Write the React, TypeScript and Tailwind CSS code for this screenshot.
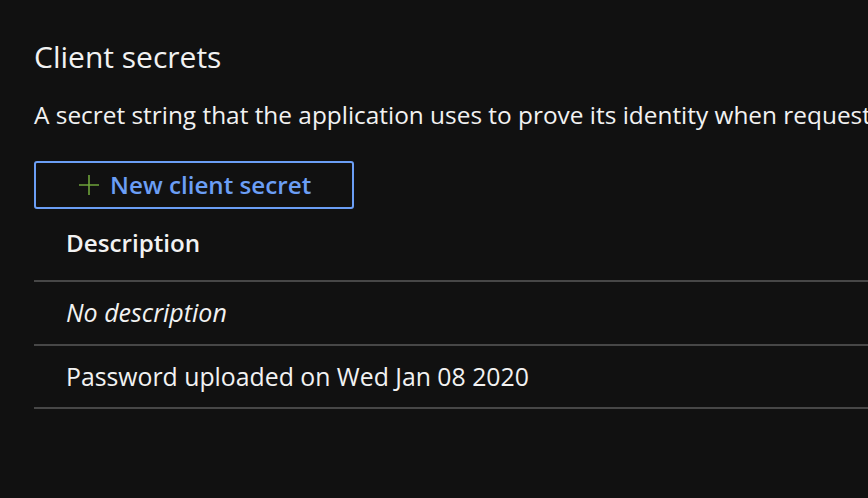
export default function App() {
  const rows = ['Password uploaded on Wed Jan 08 2020'];

  return (
    <div className="h-[498px] w-[868px] overflow-hidden bg-[#111111] font-['Open_Sans',sans-serif] text-[#f2f2f2]">
      <div className="pl-[34px] pt-[37px]">
        <h2 className="whitespace-nowrap text-[30px] leading-[40px]">Client secrets</h2>
        <p className="mt-[20px] whitespace-nowrap text-[24.4px] leading-[36px]">
          A secret string that the application uses to prove its identity when requesting a token. Also can be referred to as application password.
        </p>
        <button className="mt-[28px] flex h-[48px] w-[320px] items-center rounded-[3px] border-2 border-[#6b9ef5] pl-[42px]">
          <svg width="22" height="22" viewBox="0 0 22 22" className="mr-[10px]">
            <path d="M11 1v20M1 11h20" stroke="#6ea33a" strokeWidth="1.6" />
          </svg>
          <span className="text-[24.2px] font-semibold text-[#6b9ef5]">New client secret</span>
        </button>
        <div>
          <div className="flex h-[73px] items-center border-b-2 border-[#474747] pb-[2px] pl-[32px] text-[24.2px] font-semibold">
            Description
          </div>
          <div className="flex h-[64px] items-center border-b-2 border-[#474747] pl-[32px] text-[25px] italic">
            No description
          </div>
          {rows.map((r) => (
            <div key={r} className="flex h-[63px] items-center border-b-2 border-[#474747] pl-[32px] text-[24.8px]">
              {r}
            </div>
          ))}
        </div>
      </div>
    </div>
  );
}
